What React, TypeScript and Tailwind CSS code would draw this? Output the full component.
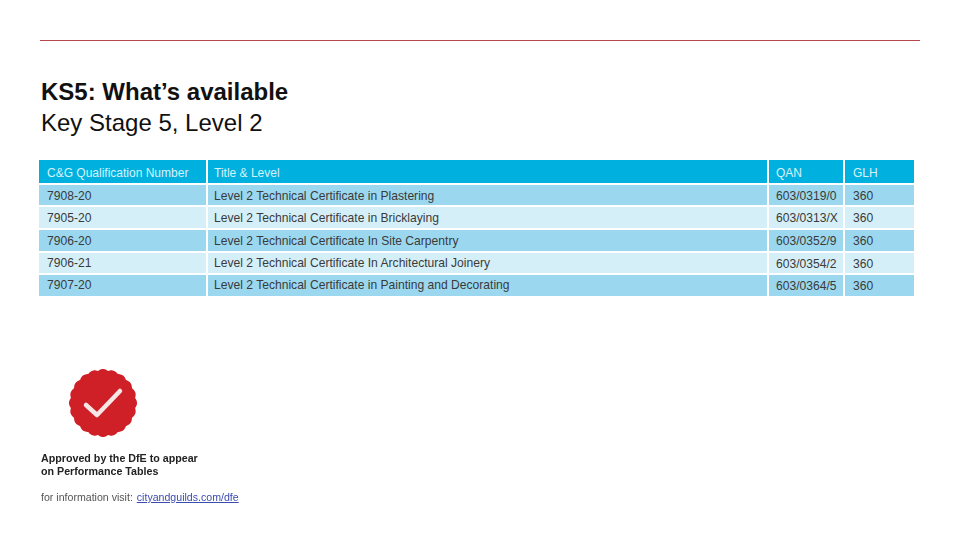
const rows = [
  { num: "7908-20", title: "Level 2 Technical Certificate in Plastering", qan: "603/0319/0", glh: "360", h: "h-[20px]", bg: "bg-[#9bd8f0]", pad: "pt-[2px]" },
  { num: "7905-20", title: "Level 2 Technical Certificate in Bricklaying", qan: "603/0313/X", glh: "360", h: "h-[21px]", bg: "bg-[#d5eff9]", pad: "pt-[1px]" },
  { num: "7906-20", title: "Level 2 Technical Certificate In Site Carpentry", qan: "603/0352/9", glh: "360", h: "h-[21px]", bg: "bg-[#9bd8f0]", pad: "pt-[1px]" },
  { num: "7906-21", title: "Level 2 Technical Certificate In Architectural Joinery", qan: "603/0354/2", glh: "360", h: "h-[20px]", bg: "bg-[#d5eff9]", pad: "pt-[1px]" },
  { num: "7907-20", title: "Level 2 Technical Certificate in Painting and Decorating", qan: "603/0364/5", glh: "360", h: "h-[21px]", bg: "bg-[#9bd8f0]", pad: "pt-0" },
]

// scalloped seal outline
function sealPath(cx: number, cy: number, r: number, bumps: number, depth: number) {
  const pts: string[] = []
  for (let i = 0; i < 240; i++) {
    const a = (i / 240) * Math.PI * 2
    const rad = r + depth * Math.abs(Math.cos((a * bumps) / 2))
    pts.push(`${(cx + rad * Math.cos(a)).toFixed(2)},${(cy + rad * Math.sin(a)).toFixed(2)}`)
  }
  return `M${pts.join("L")}Z`
}

function Cell({ className, children }: { className: string; children: React.ReactNode }) {
  return <div className={`flex items-center ${className}`}>{children}</div>
}

export default function App() {
  return (
    <div className="w-[960px] h-[540px] bg-white overflow-hidden font-['Liberation_Sans',Arial,sans-serif] text-[#3a3a3a]">
      <div className="pt-10 pl-10 pr-10">
        <div className="h-px bg-[#b9474c]" />
      </div>

      <div className="pl-[41px] pt-[35px] text-[24px] leading-[31px] text-[#111]">
        <div className="font-bold">KS5: What’s available</div>
        <div>Key Stage 5, Level 2</div>
      </div>

      <div className="ml-[39px] mt-[22px] grid grid-cols-[167px_559px_74px_69px] gap-x-[2px] gap-y-[2px] text-[12.1px] leading-none">
        <Cell className="h-[23px] bg-[#00b1e0] text-[#d8f2fb] text-[12px] pl-2 pt-[3px]">C&amp;G Qualification Number</Cell>
        <Cell className="h-[23px] bg-[#00b1e0] text-[#d8f2fb] text-[12px] pl-[6px] pt-[3px]">Title &amp; Level</Cell>
        <Cell className="h-[23px] bg-[#00b1e0] text-[#d8f2fb] text-[12px] pl-[7px] pt-[3px]">QAN</Cell>
        <Cell className="h-[23px] bg-[#00b1e0] text-[#d8f2fb] text-[12px] pl-2 pt-[3px]">GLH</Cell>
        {rows.map((r) => (
          <div key={r.num + r.title} className="contents">
            <Cell className={`${r.h} ${r.bg} ${r.pad} pl-2`}>{r.num}</Cell>
            <Cell className={`${r.h} ${r.bg} ${r.pad} pl-[6px]`}>{r.title}</Cell>
            <Cell className={`${r.h} ${r.bg} pl-[7px] pt-[2px]`}>{r.qan}</Cell>
            <Cell className={`${r.h} ${r.bg} pl-2 pt-[2px]`}>{r.glh}</Cell>
          </div>
        ))}
      </div>

      <div className="pl-[41px] pt-[72px] blur-[0.3px]">
        <svg width="70" height="70" viewBox="0 0 70 70" className="ml-[27px] block">
          <path d={sealPath(35, 35, 32.5, 20, 1.5)} fill="#cf1f27" />
          <path d="M18 37 L29 47 L52 23" fill="none" stroke="#f8e6e6" strokeWidth="4.5" strokeLinecap="round" strokeLinejoin="round" />
        </svg>
        <div className="mt-[14px] text-[10.7px] leading-[13px] font-bold text-[#222]">
          <div>Approved by the DfE to appear</div>
          <div>on Performance Tables</div>
        </div>
        <div className="mt-[13px] text-[10.6px] leading-[13px] text-[#555]">
          for information visit:{" "}
          <span className="ml-[1px] text-[#3b4bb0] underline">cityandguilds.com/dfe</span>
        </div>
      </div>
    </div>
  )
}
